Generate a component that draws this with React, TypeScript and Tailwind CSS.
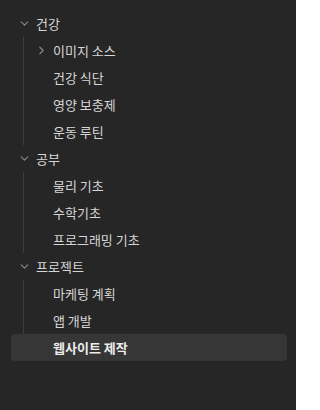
import { ChevronDown, ChevronRight } from 'lucide-react';

type Node = { label: string; children?: Node[]; collapsed?: boolean; active?: boolean };

const tree: Node[] = [
  {
    label: '건강',
    children: [
      { label: '이미지 소스', collapsed: true, children: [] },
      { label: '건강 식단' },
      { label: '영양 보충제' },
      { label: '운동 루틴' },
    ],
  },
  {
    label: '공부',
    children: [{ label: '물리 기초' }, { label: '수학기초' }, { label: '프로그래밍 기초' }],
  },
  {
    label: '프로젝트',
    children: [{ label: '마케팅 계획' }, { label: '앱 개발' }, { label: '웹사이트 제작', active: true }],
  },
];

function Row({ node }: { node: Node }) {
  return (
    <div
      className={`relative flex h-[27px] items-center rounded-[4px] pl-[26px] pr-2 ${
        node.active ? 'bg-[#363636]' : ''
      }`}
    >
      {node.children && (
        <ChevronRight className="absolute left-[24px] top-[7px] h-[13px] w-[13px] text-[#8a8a8a]" strokeWidth={2} />
      )}
      <span
        className={`pl-[16px] text-[13px] ${
          node.active ? 'font-bold text-[#ececec]' : 'text-[#d6d6d6]'
        }`}
      >
        {node.label}
      </span>
    </div>
  );
}

export default function App() {
  return (
    <div
      className="min-h-[410px] w-[296px] bg-[#262626] pl-[11px] pr-[9px] pt-[10px]"
      style={{ fontFamily: '"Noto Sans CJK KR", "Noto Sans", sans-serif' }}
    >
      {tree.map((group) => (
        <div key={group.label}>
          <div className="flex h-[27px] items-center">
            <ChevronDown className="ml-[7px] h-[13px] w-[13px] text-[#8a8a8a]" strokeWidth={2} />
            <span className="ml-[5px] text-[13px] text-[#d6d6d6]">{group.label}</span>
          </div>
          <div className="relative">
            <div className="absolute bottom-0 left-[12px] top-0 w-px bg-[#3e3e3e]" />
            {group.children!.map((child) => (
              <Row key={child.label} node={child} />
            ))}
          </div>
        </div>
      ))}
    </div>
  );
}
